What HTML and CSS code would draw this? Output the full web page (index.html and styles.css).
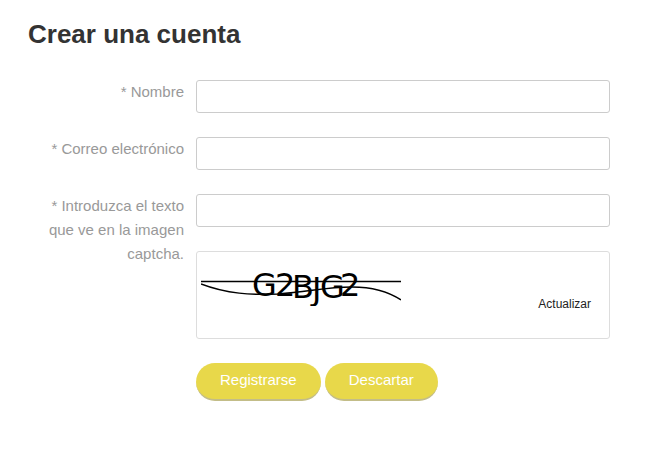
FILE: index.html
```html
<!DOCTYPE html>
<html lang="es">
<head>
<meta charset="utf-8">
<title>Crear una cuenta</title>
<link rel="stylesheet" href="styles.css">
</head>
<body>
<main class="page">
  <h1 class="title">Crear una cuenta</h1>
  <form class="form">
    <div class="row">
      <label class="label" for="name">* Nombre</label>
      <input class="field" id="name" type="text">
    </div>
    <div class="row">
      <label class="label" for="email">* Correo electrónico</label>
      <input class="field" id="email" type="email">
    </div>
    <div class="row">
      <label class="label" for="captcha">* Introduzca el texto<br>que ve en la imagen<br>captcha.</label>
      <div class="stack">
        <input class="field" id="captcha" type="text">
        <div class="captcha">
          <svg class="captcha-image" width="200" height="50" viewBox="0 0 200 50">
            <g class="glyphs">
              <text x="51" y="40">G</text>
              <text x="74" y="40">2</text>
              <text x="91" y="42">B</text>
              <text x="111" y="44">J</text>
              <text x="119" y="42">G</text>
              <text x="139" y="40">2</text>
            </g>
            <path class="wire" d="M0 25.5H200M0 28C26 38 50 39 77 38C108 36 124 31 151 31C174 31 188 36 200 44"/>
          </svg>
          <a class="refresh">Actualizar</a>
        </div>
      </div>
    </div>
    <div class="actions">
      <button class="button" type="button">Registrarse</button>
      <button class="button" type="button">Descartar</button>
    </div>
  </form>
</main>
</body>
</html>
```
FILE: styles.css
```css
* { box-sizing: border-box; }
body { margin: 0; background: #fff; color: #999; font: 15px/24px "Liberation Sans", Arial, sans-serif; }
.page { width: 660px; height: 450px; padding: 16px 50px 0 28px; }
.title { margin: 0 0 28px; color: #333; font-size: 26px; line-height: 36px; }
.form { display: flex; flex-direction: column; gap: 24px; }
.row { display: grid; grid-template-columns: 156px 414px; column-gap: 12px; height: 33px; }
.row:nth-child(3) { height: 145px; }
.label { text-align: right; }
.field { display: block; width: 100%; height: 33px; margin: 0; border: 1px solid #ccc; border-radius: 3px; background: #fff; outline: 0; }
.stack { display: flex; flex-direction: column; gap: 24px; }
.captcha { display: flex; justify-content: space-between; height: 88px; padding: 4px 18px 0 4px; border: 1px solid #ddd; border-radius: 3px; }
.captcha-image { display: block; }
.glyphs { fill: #000; font: 32px "DejaVu Sans", sans-serif; }
.wire { fill: none; stroke: #000; stroke-width: 1.5; }
.refresh { margin-top: 36px; color: #222; font-size: 12px; }
.actions { display: flex; gap: 4px; padding-left: 168px; }
.button { height: 38px; padding: 0 24px 2px; border: 0; border-bottom: 2px solid #c3bd88; border-radius: 19px; background: #e8d84a; color: #fff; font: 15px/34px "Liberation Sans", Arial, sans-serif; }
```
